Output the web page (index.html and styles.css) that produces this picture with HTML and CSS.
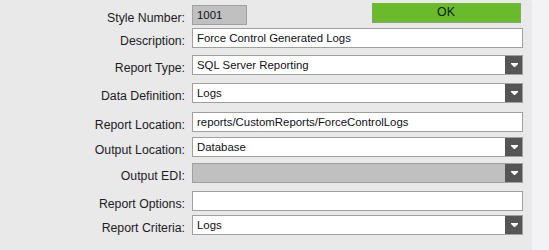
FILE: index.html
```html
<!DOCTYPE html>
<html>
<head>
<meta charset="utf-8">
<link rel="stylesheet" href="styles.css">
</head>
<body>
<div class="page">
  <div class="panel">
    <div class="row">
      <div class="label">Style Number:</div>
      <div class="field-line">
        <div class="box box-short box-disabled"><span class="val">1001</span></div>
        <button class="ok">OK</button>
      </div>
    </div>
    <div class="row">
      <div class="label">Description:</div>
      <div class="box"><span class="val">Force Control Generated Logs</span></div>
    </div>
    <div class="row">
      <div class="label">Report Type:</div>
      <div class="box select"><span class="val">SQL Server Reporting</span><span class="drop"><svg width="7" height="4" viewBox="0 0 7 4"><path d="M0 0h7v1l-3 3h-1l-3-3z" fill="#fff"/></svg></span></div>
    </div>
    <div class="row">
      <div class="label">Data Definition:</div>
      <div class="box select"><span class="val">Logs</span><span class="drop"><svg width="7" height="4" viewBox="0 0 7 4"><path d="M0 0h7v1l-3 3h-1l-3-3z" fill="#fff"/></svg></span></div>
    </div>
    <div class="row">
      <div class="label">Report Location:</div>
      <div class="box"><span class="val">reports/CustomReports/ForceControlLogs</span></div>
    </div>
    <div class="row">
      <div class="label">Output Location:</div>
      <div class="box select"><span class="val">Database</span><span class="drop"><svg width="7" height="4" viewBox="0 0 7 4"><path d="M0 0h7v1l-3 3h-1l-3-3z" fill="#fff"/></svg></span></div>
    </div>
    <div class="row">
      <div class="label">Output EDI:</div>
      <div class="box select box-disabled"><span class="val"></span><span class="drop"><svg width="7" height="4" viewBox="0 0 7 4"><path d="M0 0h7v1l-3 3h-1l-3-3z" fill="#fff"/></svg></span></div>
    </div>
    <div class="row">
      <div class="label">Report Options:</div>
      <div class="box"><span class="val"></span></div>
    </div>
    <div class="row">
      <div class="label">Report Criteria:</div>
      <div class="box select"><span class="val">Logs</span><span class="drop"><svg width="7" height="4" viewBox="0 0 7 4"><path d="M0 0h7v1l-3 3h-1l-3-3z" fill="#fff"/></svg></span></div>
    </div>
  </div>
</div>
</body>
</html>
```

FILE: styles.css
```css
html, body {
  margin: 0;
  padding: 0;
  background: #f3f3f5;
}
.page {
  width: 549px;
  height: 250px;
  display: flex;
}
.panel {
  width: 532px;
  height: 250px;
  background: #e9e9e9;
  border-top-right-radius: 3px;
  box-sizing: border-box;
  padding-top: 5px;
  display: flex;
  flex-direction: column;
  font-family: "Liberation Sans", Arial, sans-serif;
}
.row {
  display: grid;
  grid-template-columns: 185px 331px;
  column-gap: 7px;
  height: 20px;
}
.row:nth-child(2) { margin-top: 3px; }
.row:nth-child(3) { margin-top: 7px; }
.row:nth-child(4) { margin-top: 8px; }
.row:nth-child(5) { margin-top: 9px; }
.row:nth-child(6) { margin-top: 5px; }
.row:nth-child(7) { margin-top: 6px; }
.row:nth-child(8) { margin-top: 8px; }
.row:nth-child(9) { margin-top: 4px; }
.label {
  height: 20px;
  box-sizing: border-box;
  padding-top: 3px;
  line-height: 20px;
  font-size: 12.3px;
  color: #1c1c26;
  text-align: right;
  white-space: nowrap;
}
.field-line {
  display: flex;
  align-items: flex-start;
}
.box {
  height: 20px;
  box-sizing: border-box;
  border: 1px solid #a0a0a0;
  background: #ffffff;
  display: flex;
  align-items: stretch;
}
.box-short {
  width: 55px;
}
.box-disabled {
  background: #c0c0c0;
}
.val {
  flex: 1;
  padding-left: 4px;
  font-size: 11.4px;
  line-height: 18px;
  color: #101018;
  white-space: nowrap;
}
.drop {
  width: 17px;
  background: #555555;
  display: flex;
  align-items: center;
  justify-content: center;
}
.drop svg {
  display: block;
  margin-left: 1px;
}
.ok {
  margin-left: 125px;
  margin-top: -2px;
  width: 149px;
  height: 20px;
  box-sizing: border-box;
  border: none;
  border-right: 1px solid #8d9d83;
  border-bottom: 1px solid #8d9d83;
  background: #69bb2c;
  padding: 0;
  font-family: "Liberation Sans", Arial, sans-serif;
  font-size: 12.3px;
  line-height: 19px;
  color: #142010;
  text-align: center;
}
```
